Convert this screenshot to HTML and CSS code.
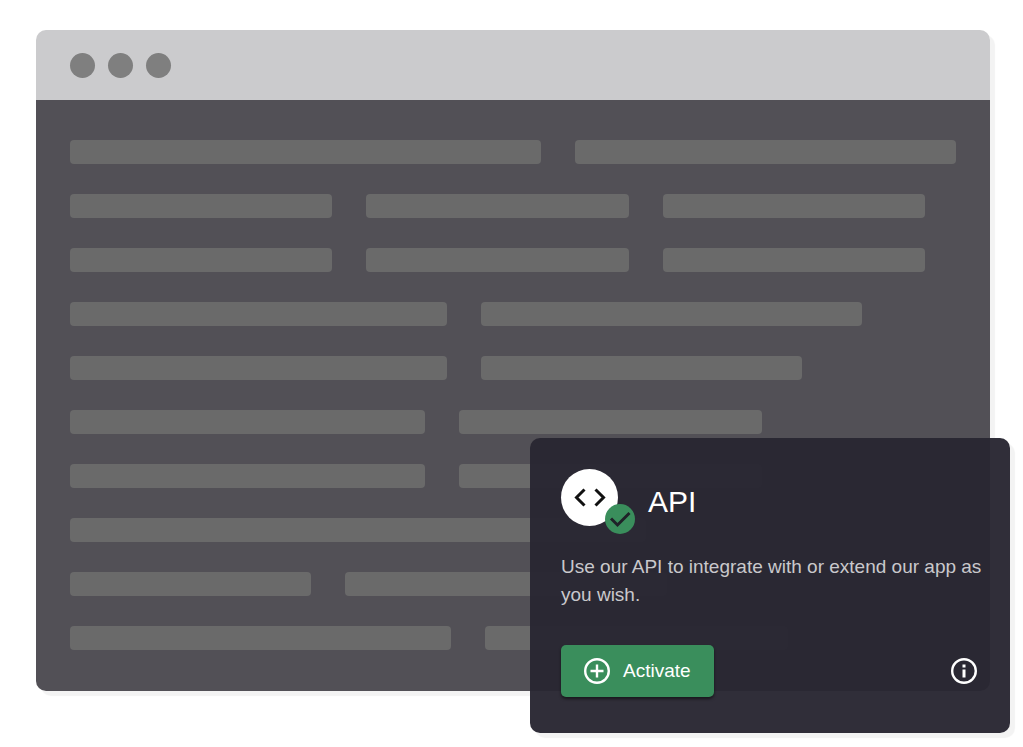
FILE: index.html
```
<!DOCTYPE html>
<html lang="en">
<head>
    <meta charset="UTF-8">
    <meta name="viewport" content="width=device-width, initial-scale=1.0">
    <title>API</title>
    <link rel="stylesheet" href="styles.css">
</head>
<body>
    <main class="stage">
        <div class="window">
            <div class="window-bar">
                <span class="dot"></span>
                <span class="dot"></span>
                <span class="dot"></span>
            </div>
            <div class="window-body">
                <div class="row"><span class="line half"></span><span class="line medium"></span></div>
                <div class="row"><span class="line third"></span><span class="line third"></span><span class="line third"></span></div>
                <div class="row"><span class="line third"></span><span class="line third"></span><span class="line third"></span></div>
                <div class="row"><span class="line regular"></span><span class="line medium"></span></div>
                <div class="row"><span class="line regular"></span><span class="line normal"></span></div>
                <div class="row"><span class="line wide"></span><span class="line short"></span></div>
                <div class="row"><span class="line wide"></span><span class="line short"></span></div>
                <div class="row"><span class="line long"></span></div>
                <div class="row"><span class="line small"></span><span class="line normal"></span></div>
                <div class="row"><span class="line medium"></span><span class="line short"></span></div>
            </div>
        </div>

        <section class="card">
            <div class="card-header">
                <div class="card-icon">
                    <svg class="code-icon" viewBox="0 0 34 22" aria-hidden="true">
                        <path d="M11.5 2.5 3.5 10.5l8 8M22.5 2.5l8 8-8 8"/>
                    </svg>
                    <span class="badge">
                        <svg class="check-icon" viewBox="0 0 30 30" aria-hidden="true">
                            <path d="M6 14.5l6.5 6.5L24.500 9"/>
                        </svg>
                    </span>
                </div>
                <h1>API</h1>
            </div>
            <p class="card-text">Use our API to integrate with or extend our app as you wish.</p>
            <div class="card-footer">
                <button type="button" class="activate">
                    <svg class="icon" viewBox="0 0 26 26" aria-hidden="true">
                        <circle cx="13" cy="13" r="11.8"/>
                        <path d="M13 6.500v13M6.500 13h13"/>
                    </svg>
                    Activate
                </button>
                <button type="button" class="info" aria-label="Info">
                    <svg class="icon" viewBox="0 0 26 26" aria-hidden="true">
                        <circle cx="13" cy="13" r="11.8"/>
                        <path class="info-mark" d="M13 11.500v8M13 6.500v3"/>
                    </svg>
                </button>
            </div>
        </section>
    </main>
</body>
</html>
```

FILE: styles.css
```
* {
    margin: 0;
    padding: 0;
    box-sizing: border-box;
}

body {
    background-color: #fff;
    font-family: "Liberation Sans", Arial, sans-serif;
}

.stage {
    position: relative;
    padding: 30px 33px 56px 36px;
}

.window {
    border-radius: 10px;
    overflow: hidden;
    box-shadow: 5px 5px 1px #f3f3f3;
}

.window-bar {
    display: flex;
    align-items: center;
    gap: 13px;
    height: 70px;
    padding: 0 34px;
    background-color: #cbcbcd;
}

.dot {
    width: 25px;
    height: 25px;
    border-radius: 50%;
    background-color: #7f7f7f;
}

.window-body {
    display: flex;
    flex-direction: column;
    gap: 30px;
    padding: 40px 34px;
    padding-bottom: 41px;
    background-color: #525056;
}

.row {
    display: flex;
    gap: 34px;
}

.line {
    height: 24px;
    border-radius: 4px;
    background-color: #6a6a6a;
}

/* placeholder widths, share of the window body */
.half { width: 53.2%; }
.long { width: 65%; }
.medium { width: 43%; }
.regular { width: 42.5%; }
.wide { width: 40.1%; }
.normal { width: 36.3%; }
.short { width: 34.2%; }
.third { width: 29.6%; }
.small { width: 27.2%; }

.card {
    position: absolute;
    right: 13px;
    bottom: 14px;
    width: 480px;
    padding: 31px 31px 36px;
    border-radius: 10px;
    background-color: rgba(40, 38, 50, 0.965);
    box-shadow: 5px 5px 1px #f3f3f3;
}

.card-header {
    display: flex;
    align-items: center;
    gap: 30px;
    margin-bottom: 27px;
}

.card-icon {
    position: relative;
    display: flex;
    align-items: center;
    justify-content: center;
    width: 57px;
    height: 57px;
    border-radius: 50%;
    background-color: #fff;
}

.code-icon {
    width: 34px;
    height: 22px;
    fill: none;
    stroke: #111;
    stroke-width: 3;
}

.badge {
    position: absolute;
    right: -17px;
    bottom: -8px;
    width: 30px;
    height: 30px;
    border-radius: 50%;
    background-color: #3a8e5c;
}

.check-icon {
    display: block;
    fill: none;
    stroke: #1f2228;
    stroke-width: 3;
}

h1 {
    padding-top: 8px;
    color: #fff;
    font-size: 30px;
    font-weight: normal;
}

.card-text {
    margin-right: -10px;
    color: #c9c8cc;
    font-size: 19px;
    line-height: 28px;
}

.card-footer {
    display: flex;
    align-items: center;
    justify-content: space-between;
    margin-top: 36px;
}

.icon {
    width: 26px;
    height: 26px;
    fill: none;
    stroke: currentColor;
    stroke-width: 2.4;
}

.info-mark {
    stroke-width: 3;
}

.activate {
    display: flex;
    align-items: center;
    gap: 13px;
    height: 52px;
    padding: 0 23px;
    border: none;
    border-radius: 5px;
    background-color: #3a8e5c;
    box-shadow: 0 2px 3px rgba(0, 0, 0, 0.5);
    color: #fff;
    font-family: inherit;
    font-size: 19px;
    cursor: pointer;
}

.info {
    display: flex;
    margin-right: 2px;
    border: none;
    background: none;
    color: #fff;
    cursor: pointer;
}
```
